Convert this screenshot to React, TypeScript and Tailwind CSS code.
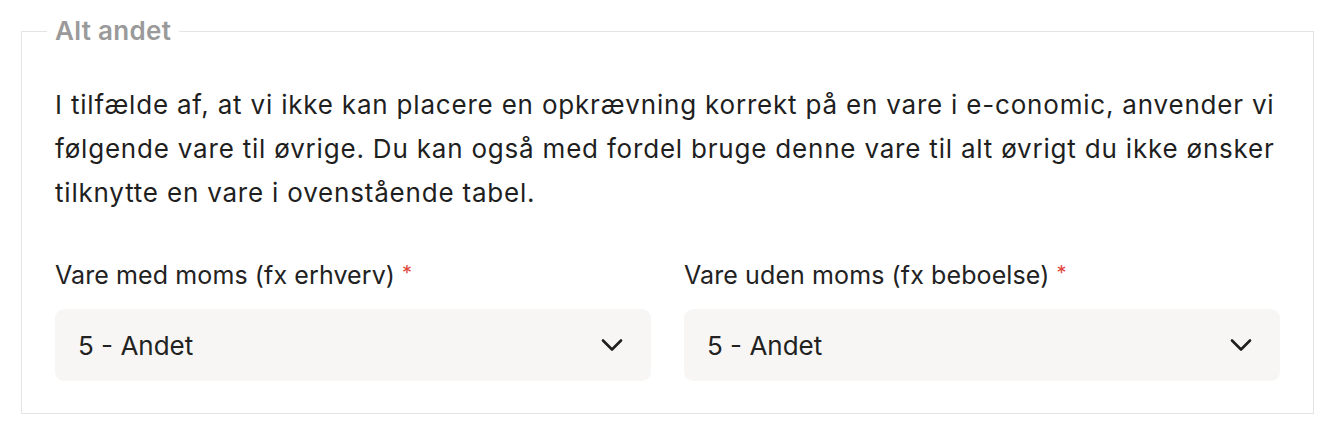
import React from "react";

function Chevron() {
  return (
    <svg width="24" height="24" viewBox="0 0 24 24" fill="none" stroke="#1f1f1f" strokeWidth="2.6" strokeLinecap="round" strokeLinejoin="round">
      <path d="M3 7.5l9 9 9-9" />
    </svg>
  );
}

function Field({ label }: { label: string }) {
  return (
    <div className="flex flex-col">
      <div className="text-[25px] text-[#222] leading-[30px] mb-[19px] flex items-start tracking-[0.1px]">
        <span>{label}</span>
        <span className="text-[#e0473c] ml-[7px] text-[20px] leading-[26px]">*</span>
      </div>
      <div className="h-[72px] rounded-[9px] bg-[#f7f6f4] flex items-center justify-between pl-[23px] pr-[27px]">
        <span className="text-[26px] text-[#222]">5 - Andet</span>
        <Chevron />
      </div>
    </div>
  );
}

export default function App() {
  return (
    <div className="w-[1344px] h-[440px] bg-white pt-[15px] pl-[21px]" style={{ fontFamily: "Inter, 'Noto Sans', sans-serif" }}>
      <fieldset className="w-[1293px] border border-[#e4e4e4] px-[33px] pb-[32px] pt-[36px]">
        <legend className="px-[8px] -ml-[8px] text-[26px] font-semibold text-[#9a9a9a] leading-[32px] tracking-[0.3px]">Alt andet</legend>
        <p className="text-[26px] leading-[44px] text-[#1f1f1f] tracking-[0.8px] -mr-[30px]">
          I tilfælde af, at vi ikke kan placere en opkrævning korrekt på en vare i e-conomic, anvender vi
          <br />
          følgende vare til øvrige. Du kan også med fordel bruge denne vare til alt øvrigt du ikke ønsker
          <br />
          tilknytte en vare i ovenstående tabel.
        </p>
        <div className="grid grid-cols-2 gap-[33px] mt-[45px]">
          <Field label="Vare med moms (fx erhverv)" />
          <Field label="Vare uden moms (fx beboelse)" />
        </div>
      </fieldset>
    </div>
  );
}
